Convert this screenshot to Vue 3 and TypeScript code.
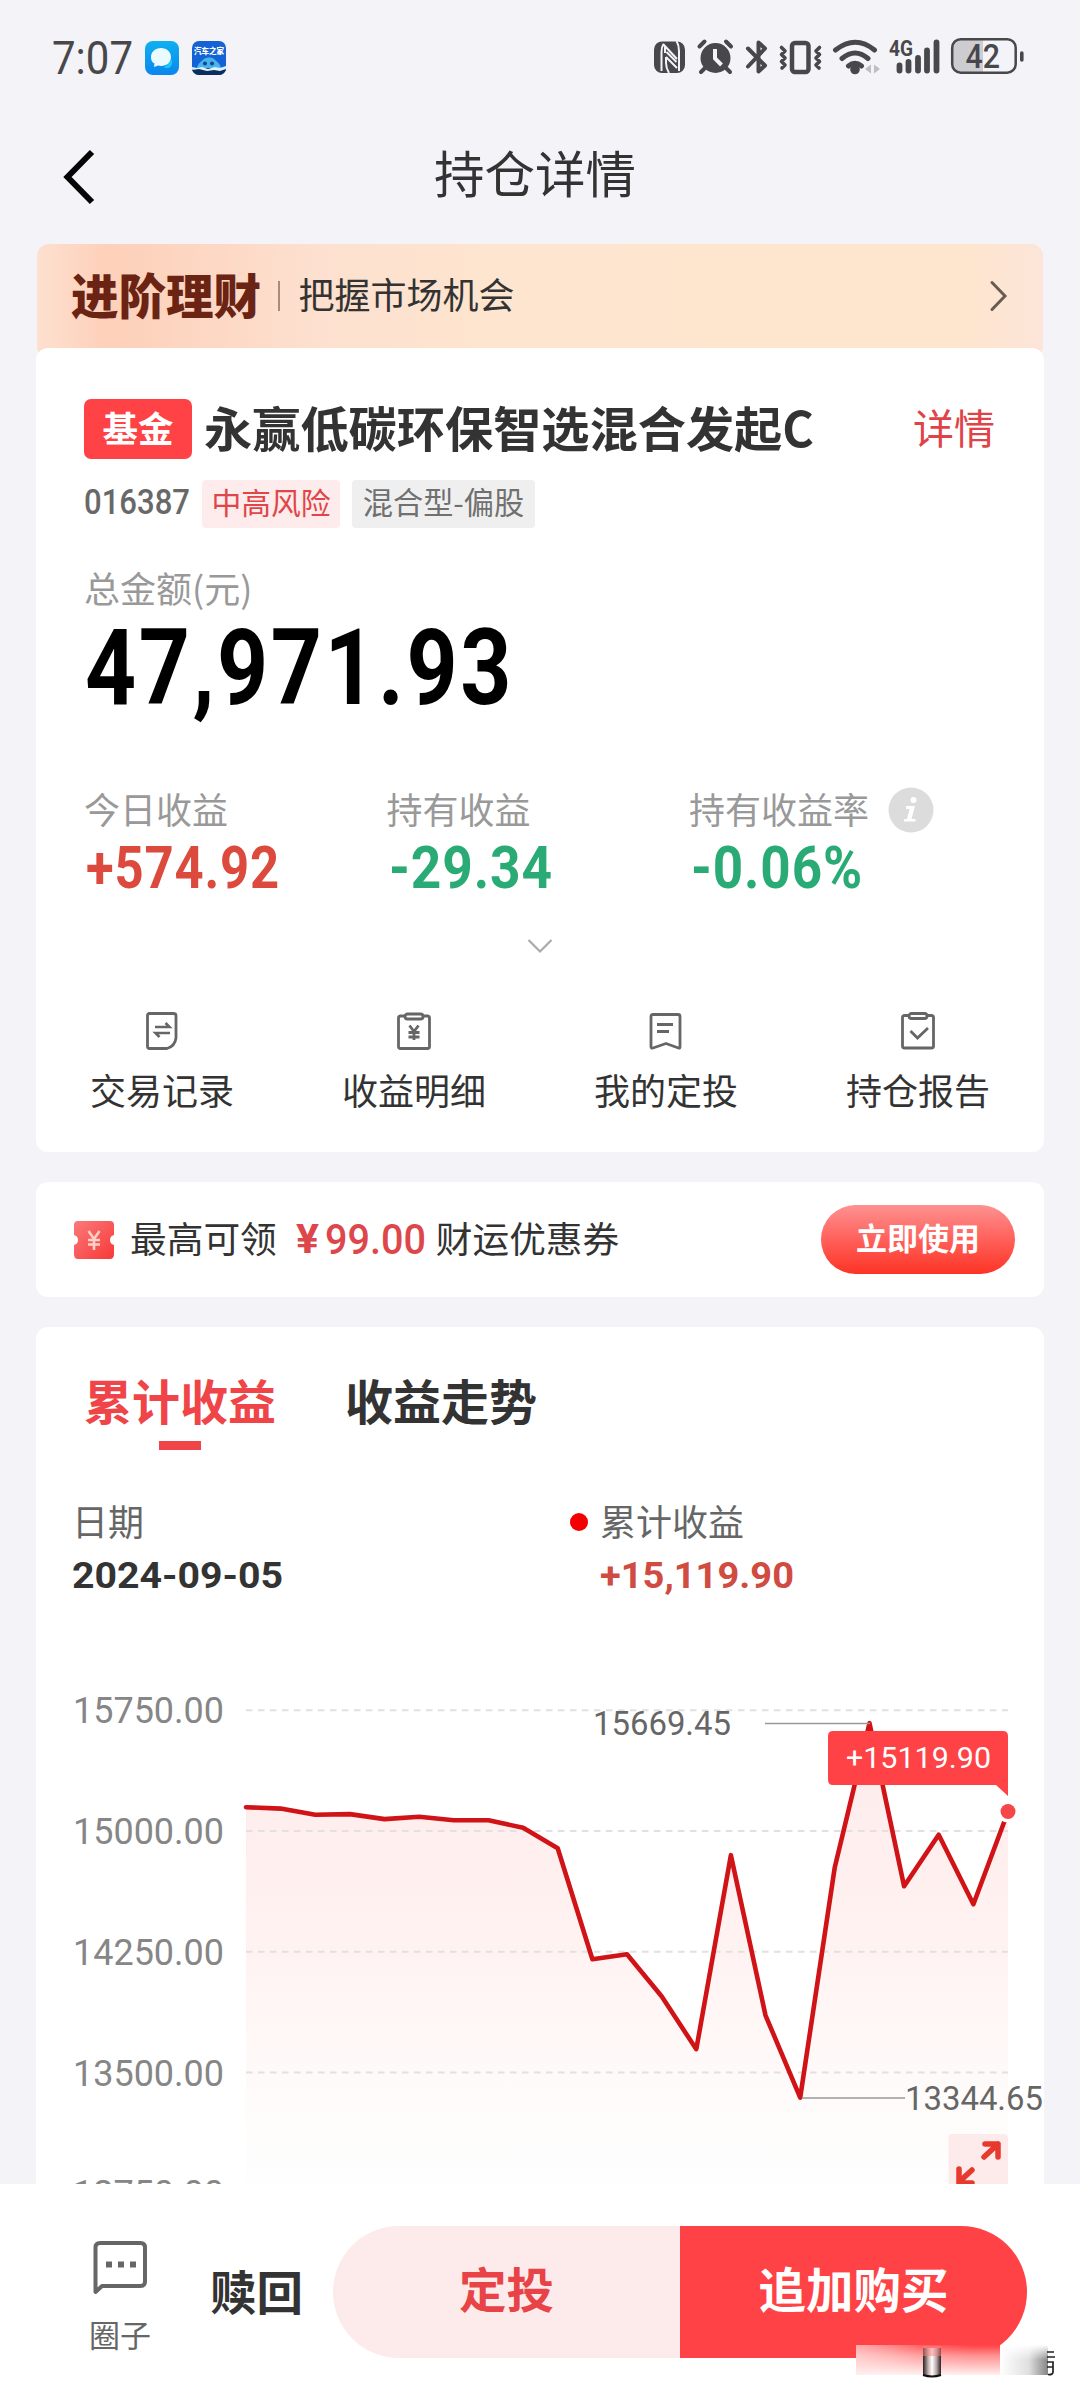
<script setup lang="ts">
interface Stat {
  label: string
  value: string
  width: number
  tone: 'up' | 'down'
  info?: boolean
}

const stats: Stat[] = [
  { label: '今日收益', value: '+574.92', width: 194, tone: 'up' },
  { label: '持有收益', value: '-29.34', width: 164, tone: 'down' },
  { label: '持有收益率', value: '-0.06%', width: 172, tone: 'down', info: true },
]

const actions = [
  { label: '交易记录', icon: 'record' },
  { label: '收益明细', icon: 'detail' },
  { label: '我的定投', icon: 'plan' },
  { label: '持仓报告', icon: 'report' },
]

/* chart geometry, in the svg's own pixels */
const left = 210
const right = 972
const yOf = (v: number): number => 176 + ((15000 - v) / 750) * 120.8

const series: number[] = [
  15148, 15139, 15101, 15105, 15074, 15089, 15067, 15067, 15020, 14893, 14204, 14235,
  13974, 13645, 14850, 13856, 13344.65, 14775, 15669.45, 14657, 14977, 14545, 15119.9,
]
const xOf = (i: number): number => left + (i * (right - left)) / (series.length - 1)
const line = series.map((v, i) => `${xOf(i).toFixed(1)},${yOf(v).toFixed(1)}`).join(' ')
const area = `${left},529 ${line} ${right},529`
const ticks = [15750, 15000, 14250, 13500, 12750]
</script>

<template>
  <div class="page">
    <header class="status">
      <svg class="clock" width="84" height="64">
        <text x="0" y="48" textLength="81" lengthAdjust="spacingAndGlyphs">7:07</text>
      </svg>
      <svg class="app" width="34" height="34" viewBox="0 0 34 34">
        <defs>
          <linearGradient id="msg" x1="0" y1="0" x2="0" y2="1">
            <stop offset="0" stop-color="#0fb0f0" /><stop offset="1" stop-color="#0a86ee" />
          </linearGradient>
        </defs>
        <rect width="34" height="34" rx="8" fill="url(#msg)" />
        <path d="M19 27h5q4-2 3-9z" fill="#19c8f4" />
        <path d="M16 7c6 0 10 4 10 9s-4 9-10 9c-1 0-2 0-3-.4L9 26l.5-3.500C7 21.500 6 19 6 16c0-5 4-9 10-9z" fill="#e9fbff" />
      </svg>
      <svg class="app second" width="34" height="34" viewBox="0 0 34 34">
        <defs><clipPath id="appclip"><rect width="34" height="34" rx="7" /></clipPath></defs>
        <g clip-path="url(#appclip)">
          <rect width="34" height="34" fill="#1463d6" />
          <rect y="27" width="34" height="7" fill="#0b2f5c" />
          <path d="M5 27c1-5 5-7 7-9 3-2 8-2 10 0 3 3 6 4 7 9z" fill="#4bb2ec" />
          <circle cx="13" cy="22.500" r="2" fill="#0d4a94" /><circle cx="20" cy="22.500" r="2" fill="#0d4a94" />
          <path d="M0 26l5 1 5-1 6 2 7-2 5 1 6-2v3l-6 2-6-1-7 1-8-2-7 1z" fill="#d8f3ff" />
        </g>
        <text x="17" y="13" text-anchor="middle" class="app-name">汽车之家</text>
      </svg>
      <svg class="sys" width="380" height="44" viewBox="0 0 380 44">
        <g fill="#48484b">
          <rect x="4" y="5.500" width="31" height="31.500" rx="8" />
          <path d="M13.500 8q-2 3-2 8v19M13 8l14 15M15 17v-7M16 21l11 11M16 21v6q0 5 3 10M26.500 5q2.500 4 2.500 10v20" stroke="#f3f3f8" stroke-width="2" fill="none" />
          <path d="M16.500 16l10 10" stroke="#f3f3f8" stroke-width="2" />
          <circle cx="65.500" cy="22" r="15" />
          <path d="M65 13v9.500l6.500 6.500" stroke="#f3f3f8" stroke-width="4" fill="none" />
          <path d="M49.500 10.500l5-5M81 10.500l-5-5M55 32l-4 4M76 32l4 4" stroke="#48484b" stroke-width="4" stroke-linecap="round" />
        </g>
        <g fill="none" stroke="#48484b" stroke-width="4" stroke-linejoin="round" stroke-linecap="round">
          <path d="M98 12.500l17 17-6.500 6V6.500l6.500 6-17 18" />
          <rect x="142" y="7" width="16.500" height="29" rx="3" stroke-width="4.500" />
          <path d="M131.500 11.500l3.500 3.500-3.500 3.500 3.500 3.500-3.500 3.500 3.500 3.500-3 3M169.500 11.500l-3.500 3.500 3.500 3.500-3.500 3.500 3.500 3.500-3.500 3.500 3 3" stroke-width="3.600" />
          <path d="M185.500 14q20-15.500 39 0M192 22.500q13-11 26 0M198.500 30q6.500-5.500 13 0" stroke-width="5" />
        </g>
        <circle cx="205" cy="33.500" r="4.800" fill="#48484b" />
        <path d="M221 28.500v9l-6-4.500zM224 28.500v9l6-4.500z" fill="#bdbdc2" />
        <path d="M249.500 29.500v5M258.500 26v8.500M268 22v12.500M277 14.500v20M286.500 6.500v28" stroke="#48484b" stroke-width="5.800" stroke-linecap="round" />
        <text x="239" y="20" class="net" textLength="24" lengthAdjust="spacingAndGlyphs">4G</text>
        <path d="M313 3.500h-4q-7 0-7 7v19q0 7 7 7h24v-33z" fill="#cdcdd1" />
        <rect x="302.200" y="3.200" width="63.500" height="33.500" rx="8.500" fill="none" stroke="#48484b" stroke-width="2.500" />
        <path d="M371.800 17v7" stroke="#48484b" stroke-width="3.600" stroke-linecap="round" />
        <text x="315.500" y="32" class="batt" textLength="34.500" lengthAdjust="spacingAndGlyphs">42</text>
      </svg>
    </header>

    <nav class="nav">
      <svg class="back" width="40" height="60" viewBox="0 0 40 60">
        <path d="M32 6L7.500 31 32 56" fill="none" stroke="#050505" stroke-width="6" />
      </svg>
      <h1>持仓详情</h1>
    </nav>

    <section class="banner">
      <b>进阶理财</b>
      <i></i>
      <span>把握市场机会</span>
      <svg width="20" height="34" viewBox="0 0 20 34">
        <path d="M4 3.500l13 13.500L4 30.500" fill="none" stroke="#6b5a52" stroke-width="3" stroke-linecap="round" />
      </svg>
    </section>

    <section class="card holding">
      <div class="fund">
        <span class="badge">基金</span>
        <h2>永赢低碳环保智选混合发起C</h2>
        <a>详情</a>
      </div>
      <div class="meta">
        <svg width="108" height="48">
          <text x="0" y="34" textLength="106" lengthAdjust="spacingAndGlyphs" class="code">016387</text>
        </svg>
        <span class="tag risk">中高风险</span>
        <span class="tag kind">混合型-偏股</span>
      </div>
      <div class="label total-label">总金额(元)</div>
      <svg class="total" width="440" height="124">
        <text x="0" y="95" textLength="429" lengthAdjust="spacingAndGlyphs">47,971.93</text>
      </svg>
      <div class="stats">
        <div v-for="s in stats" :key="s.label" class="stat">
          <div class="label">
            {{ s.label }}
            <svg v-if="s.info" class="info" width="46" height="46" viewBox="0 0 46 46">
              <circle cx="23" cy="23" r="22.500" fill="#dcdcdc" />
              <circle cx="25.500" cy="13" r="3" fill="#fff" />
              <path d="M18 19h9l-3.500 13h4v2.500H16V32h3l2.500-10H18z" fill="#fff" />
            </svg>
          </div>
          <svg width="210" height="76" :class="s.tone">
            <text x="2" y="60" :textLength="s.width" lengthAdjust="spacingAndGlyphs">{{ s.value }}</text>
          </svg>
        </div>
      </div>
      <svg class="more" width="30" height="24" viewBox="0 0 30 24">
        <path d="M3.500 6L15 17.500 26.500 6" fill="none" stroke="#aaa" stroke-width="2.200" />
      </svg>
      <div class="actions">
        <div v-for="a in actions" :key="a.label" class="action">
          <svg width="40" height="40" viewBox="0 0 40 40" fill="none" stroke="#666" stroke-width="2.800" stroke-linejoin="round">
            <template v-if="a.icon === 'record'">
              <path d="M7 1.500h24q3 0 3 2V26q-1 8-9 10.500H7.500q-2 0-2-2V3.500q0-2 2-2z" />
              <path d="M13 15h14.500l-4-4M28 21H13.500l4 4" stroke-width="2.600" stroke-linejoin="miter" />
            </template>
            <template v-else-if="a.icon === 'detail'">
              <path d="M11 4H6.500Q4.500 4 4.500 6v28.500q0 2 2 2h27q2 0 2-2V6q0-2-2-2H29" />
              <rect x="11" y="2" width="18" height="5" rx="2.500" />
              <path d="M15.500 13.500l4.500 6 4.500-6M14.500 20.500h11M14.500 25h11M20 19v9" stroke-width="2.800" />
            </template>
            <template v-else-if="a.icon === 'plan'">
              <path d="M7 2.500h25q2 0 2 2V35q0 1.500-1.500 1L20 31.500 7 36q-2 .5-2-1V4.500q0-2 2-2z" />
              <path d="M11 12.500h16M11 19.500h12" />
            </template>
            <template v-else>
              <path d="M11 3.500H6.500Q4.500 3.500 4.500 5.500v28.500q0 2 2 2h27q2 0 2-2V5.500q0-2-2-2H29" />
              <rect x="11" y="1.500" width="18" height="5" rx="2.500" />
              <path d="M12.500 19l7 7L30 16" stroke-linejoin="miter" />
            </template>
          </svg>
          <span>{{ a.label }}</span>
        </div>
      </div>
    </section>

    <section class="card coupon">
      <svg class="ticket" width="42" height="40" viewBox="0 0 42 40">
        <defs>
          <linearGradient id="tk" x1="0" y1="0" x2="1" y2="1">
            <stop offset="0" stop-color="#f97a7a" /><stop offset="1" stop-color="#f93838" />
          </linearGradient>
        </defs>
        <path d="M5 1h32q4 0 4 4v10q-4 1-4 5t4 5v9q0 5-4 5H5q-4 0-4-5v-9q4-1 4-5t-4-5V5q0-4 4-4z" fill="url(#tk)" />
        <path d="M15.500 11l5.500 8 5.500-8M15 20h12M15 24.500h12M21 19v11" fill="none" stroke="#ffd0c6" stroke-width="2.600" />
      </svg>
      <span>最高可领</span>
      <svg class="price" width="132" height="60">
        <text x="0" y="44" class="yen" textLength="23" lengthAdjust="spacingAndGlyphs">¥</text>
        <text x="29" y="45" textLength="101" lengthAdjust="spacingAndGlyphs">99.00</text>
      </svg>
      <span class="after">财运优惠券</span>
      <button>立即使用</button>
    </section>

    <section class="card trend">
      <div class="tabs">
        <div class="tab on">累计收益</div>
        <div class="tab">收益走势</div>
      </div>
      <div class="legend">
        <div class="date">
          <span>日期</span>
          <svg width="230" height="54">
            <text x="0" y="41" textLength="211" lengthAdjust="spacingAndGlyphs">2024-09-05</text>
          </svg>
        </div>
        <div class="sum">
          <span>累计收益</span>
          <svg width="230" height="54">
            <text x="0" y="41" textLength="194" lengthAdjust="spacingAndGlyphs">+15,119.90</text>
          </svg>
        </div>
      </div>
      <svg class="chart" width="1008" height="529" viewBox="0 0 1008 529">
        <defs>
          <linearGradient id="fill" gradientUnits="userSpaceOnUse" x1="0" y1="69" x2="0" y2="529">
            <stop offset="0" stop-color="#fdeaea" />
            <stop offset=".45" stop-color="#fff2f1" />
            <stop offset=".85" stop-color="#fefcfb" />
            <stop offset="1" stop-color="#fefefe" />
          </linearGradient>
        </defs>
        <polygon :points="area" fill="url(#fill)" />
        <g v-for="t in ticks" :key="t">
          <line v-if="t > 13000" :x1="left" :x2="right" :y1="yOf(t)" :y2="yOf(t)" stroke="#e3e0e0" stroke-width="2" stroke-dasharray="6.500 5.500" />
          <text x="37" :y="yOf(t) + 13" class="tick" textLength="151" lengthAdjust="spacingAndGlyphs">{{ t.toFixed(2) }}</text>
        </g>
        <polyline :points="line" fill="none" stroke="#d01317" stroke-width="4.600" stroke-linejoin="round" stroke-linecap="round" />
        <path d="M729 68.500h105M766 443h103" stroke="#999" stroke-width="1.600" />
        <text x="557" y="80" class="mark" textLength="138" lengthAdjust="spacingAndGlyphs">15669.45</text>
        <text x="869" y="455" class="mark" textLength="138" lengthAdjust="spacingAndGlyphs">13344.65</text>
        <path d="M797 76h170q5 0 5 5v60l-12-11H797q-5 0-5-5V81q0-5 5-5z" fill="#ff4245" />
        <text x="810" y="113" class="tip" textLength="145" lengthAdjust="spacingAndGlyphs">+15119.90</text>
        <circle cx="972" cy="156.500" r="11" fill="#fff" />
        <circle cx="972" cy="156.500" r="7.500" fill="#f54749" />
        <rect x="912.500" y="479" width="59.500" height="59" rx="4" fill="#fdeaea" />
        <g stroke="#e8392f" stroke-width="5.500" fill="none" stroke-linecap="round" stroke-linejoin="round">
          <path d="M948 502l14-13M949 489h13v13M936 515l-13 12M923 514v14h13" />
        </g>
      </svg>
    </section>

    <footer class="bar">
      <div class="circle">
        <svg width="58" height="58" viewBox="0 0 58 58">
          <path d="M4.500 53V8.500q0-4.500 4.500-4.500h40.500Q54 4 54 8.500v34q0 4.500-4.500 4.500H11z" fill="none" stroke="#666" stroke-width="4" stroke-linejoin="round" />
          <path d="M15 22.500h6v6h-6zM27 22.500h6v6h-6zM39 22.500h6v6h-6z" fill="#666" />
        </svg>
        <span>圈子</span>
      </div>
      <div class="redeem">赎回</div>
      <div class="pill">
        <div class="plan">定投</div>
        <div class="buy">追加购买</div>
      </div>
      <svg class="smudge" width="200" height="36" viewBox="0 0 200 36">
        <defs>
          <linearGradient id="sv" x1="0" y1="0" x2="0" y2="1">
            <stop offset="0" stop-color="#ff4245" /><stop offset=".35" stop-color="#ff9090" /><stop offset="1" stop-color="#fff0ee" />
          </linearGradient>
          <linearGradient id="sh" x1="0" y1="0" x2="1" y2="0">
            <stop offset="0" stop-color="#ffeeee" stop-opacity=".6" /><stop offset=".45" stop-color="#fff" stop-opacity=".15" /><stop offset=".8" stop-color="#fff" stop-opacity="0" />
          </linearGradient>
          <linearGradient id="sg" x1="0" y1="0" x2="1" y2="0">
            <stop offset="0" stop-color="#fff" /><stop offset=".6" stop-color="#dcdcdc" /><stop offset="1" stop-color="#777" />
          </linearGradient>
          <linearGradient id="sp" x1="0" y1="0" x2="1" y2="0">
            <stop offset="0" stop-color="#222" /><stop offset=".3" stop-color="#c9b2b2" /><stop offset=".5" stop-color="#fff" /><stop offset=".75" stop-color="#baa5a5" /><stop offset="1" stop-color="#222" />
          </linearGradient>
          <linearGradient id="sf" x1="0" y1="0" x2="0" y2="1">
            <stop offset="0" stop-color="#fff" stop-opacity="1" /><stop offset=".5" stop-color="#fff" stop-opacity=".1" />
          </linearGradient>
        </defs>
        <rect y="0" width="144" height="30" fill="url(#sv)" />
        <rect y="0" width="144" height="30" fill="url(#sh)" />
        <rect x="144" y="0" width="48" height="30" fill="url(#sg)" />
        <rect x="144" y="0" width="48" height="30" fill="url(#sf)" />
        <path d="M67 3h18v27q-9 3-18 0z" fill="url(#sp)" />
        <rect x="67" y="1" width="18" height="10" fill="#ff8080" opacity=".5" />
        <path d="M67 30q9 3 18 0" stroke="#111" stroke-width="2" fill="none" />
        <path d="M191 7h7M191 12h8M191 17h6v10q0 3-5 2.500M191 22h6" stroke="#222" stroke-width="1.700" fill="none" />
      </svg>
    </footer>
  </div>
</template>

<style>
body {
  background: #f3f3f8;
}
</style>

<style scoped>
.page {
  width: 1080px;
  height: 2400px;
  overflow: hidden;
  background: #f3f3f8;
  color: #333;
  font-family: 'Noto Sans CJK SC', 'Noto Sans', sans-serif;
}
svg {
  display: block;
  flex: none;
}
svg text {
  font-family: Roboto, 'Liberation Sans', sans-serif;
}
.status {
  height: 116px;
  display: flex;
  align-items: center;
  padding-left: 52px;
}
.clock text {
  font-size: 46px;
  fill: #48484b;
}
.app {
  margin-left: 9px;
}
.app.second {
  margin-left: 13px;
}
.app .app-name {
  font: 900 7.500px 'Noto Sans CJK SC', sans-serif;
  fill: #fff;
}
.sys {
  margin-left: 424px;
}
.sys .net {
  font-size: 22px;
  font-weight: 700;
  fill: #48484b;
}
.sys .batt {
  font-size: 33px;
  font-weight: 500;
  fill: #48484b;
}
.nav {
  height: 110px;
  margin-bottom: 18px;
  display: grid;
  grid-template-columns: 180px 1fr 190px;
  align-items: center;
}
.back {
  margin-left: 60px;
  margin-top: 10px;
}
.nav h1 {
  margin: 0;
  font-size: 50.500px;
  line-height: 60px;
  font-weight: 400;
  text-align: center;
}
.banner {
  box-sizing: border-box;
  height: 114px;
  margin: 0 37px;
  padding: 0 35px 15px 34px;
  border-radius: 12px;
  display: flex;
  align-items: center;
  background: linear-gradient(90deg, #fde0d0 0, #fdd0b9 7%, #fde0cf 28%, #fee5cf 45%, #fde5ce 92%, #fce5d8 100%);
}
.banner b {
  font-size: 47.500px;
  line-height: 60px;
  font-weight: 900;
  color: #6b2413;
}
.banner i {
  width: 1.500px;
  height: 30px;
  margin: 4px 19px 0 17px;
  background: #a98a7b;
}
.banner span {
  flex: 1;
  margin-top: -2px;
  font-size: 36px;
  line-height: 50px;
}
.banner svg {
  margin-top: 4px;
}
.card {
  box-sizing: border-box;
  margin: 0 36px;
  background: #fff;
  border-radius: 12px;
}
.holding {
  height: 804px;
  margin-top: -10px;
  padding-top: 51px;
}
.fund {
  height: 60px;
  padding: 0 49px 0 48px;
  display: flex;
  align-items: center;
}
.badge {
  width: 108px;
  height: 60px;
  border-radius: 7px;
  background: #ff4245;
  color: #fff;
  font-size: 35.500px;
  font-weight: 700;
  line-height: 56px;
  text-align: center;
}
.fund h2 {
  flex: 1;
  margin: -7px 0 0 12px;
  font-size: 48.200px;
  line-height: 60px;
  font-weight: 700;
  white-space: nowrap;
}
.fund a {
  margin-top: -6px;
  font-size: 41px;
  line-height: 60px;
  color: #e04347;
}
.meta {
  height: 48px;
  margin-top: 21px;
  padding-left: 48px;
  display: flex;
}
.meta .code {
  font-size: 35px;
  font-weight: 500;
  fill: #686868;
}
.tag {
  height: 48px;
  border-radius: 4px;
  font-size: 29.800px;
  line-height: 42px;
  text-align: center;
  white-space: nowrap;
}
.tag.risk {
  width: 138px;
  margin-left: 10px;
  background: #feecec;
  color: #df4649;
}
.tag.kind {
  width: 183px;
  margin-left: 12px;
  background: #efefef;
  color: #707070;
  font-size: 30.200px;
}
.label {
  height: 40px;
  display: flex;
  align-items: center;
  font-size: 36px;
  line-height: 40px;
  color: #999;
}
.total-label {
  margin: 39px 0 2px 48px;
}
.total {
  margin-left: 49px;
}
.total text {
  font-size: 105px;
  font-weight: 700;
  letter-spacing: 3px;
  fill: #000;
}
.stats {
  display: flex;
  margin: 55px 0 0 48px;
}
.stat {
  width: 302.500px;
}
.stat text {
  font-size: 60px;
  font-weight: 700;
  letter-spacing: 1px;
}
.info {
  margin: 4px 0 0 19px;
}
.up text {
  fill: #dc493d;
}
.down text {
  fill: #2aab75;
}
.more {
  margin: 30px auto 0;
}
.actions {
  margin-top: 54px;
  display: grid;
  grid-template-columns: repeat(4, 1fr);
}
.action {
  display: flex;
  flex-direction: column;
  align-items: center;
  gap: 17px;
  font-size: 36px;
  line-height: 40px;
}
.coupon {
  height: 115px;
  margin-top: 30px;
  padding: 0 29px 0 37px;
  display: flex;
  align-items: center;
  font-size: 36.700px;
  line-height: 50px;
}
.coupon span {
  margin: -6px 0 0 15px;
}
.coupon .price {
  margin: -2px 0 0 19px;
}
.coupon span.after {
  flex: 1;
  margin-left: 8px;
}
.price text {
  font-size: 43px;
  font-weight: 500;
  fill: #dd474c;
}
.price .yen {
  font-size: 40px;
  font-weight: 700;
}
.coupon button {
  width: 194px;
  height: 69px;
  padding: 0 0 5px;
  border: 0;
  border-radius: 35px;
  background: linear-gradient(#fd9291, #ff6560 45%, #fd3325);
  color: #fff;
  font: 700 31px/60px 'Noto Sans CJK SC', sans-serif;
}
.trend {
  height: 857px;
  margin-top: 30px;
  overflow: hidden;
  border-radius: 12px 12px 0 0;
}
.tabs {
  display: flex;
  gap: 69px;
  padding: 42px 0 0 48px;
}
.tab {
  font-size: 48px;
  line-height: 60px;
  font-weight: 700;
}
.tab.on {
  color: #ef4548;
}
.tab.on::after {
  content: '';
  display: block;
  width: 42px;
  height: 9px;
  margin: 12px auto 0;
  background: #ef4548;
}
.legend {
  height: 101px;
  margin-top: 50px;
  padding-left: 36px;
  display: flex;
  font-size: 36px;
  line-height: 40px;
  color: #666;
}
.legend span {
  display: block;
  height: 47px;
}
.date {
  width: 528px;
}
.legend text {
  font-size: 37px;
  font-weight: 700;
}
.date text {
  fill: #333;
}
.sum text {
  fill: #d04b42;
}
.legend .sum {
  width: 300px;
}
.sum span::before {
  content: '';
  float: left;
  width: 18px;
  height: 18px;
  margin: 13px 0 0 -30px;
  border-radius: 50%;
  background: #f50000;
}
.chart {
  margin-top: 54px;
}
.chart .tick {
  font-size: 36px;
  fill: #868686;
}
.chart .mark {
  font-size: 34px;
  fill: #666;
}
.chart .tip {
  font-size: 30px;
  fill: #fff;
}
.bar {
  position: relative;
  box-sizing: border-box;
  height: 216px;
  padding: 42px 53px 0 86px;
  display: flex;
  background: #fff;
}
.circle {
  width: 68px;
  padding-top: 13px;
  display: flex;
  flex-direction: column;
  align-items: center;
  font-size: 31px;
  line-height: 40px;
  color: #666;
}
.circle span {
  margin-top: 17px;
}
.redeem {
  width: 123px;
  padding-left: 56px;
  font-size: 46.500px;
  line-height: 127px;
  font-weight: 700;
}
.pill {
  width: 694px;
  height: 132px;
  border-radius: 66px;
  display: flex;
  overflow: hidden;
  font-size: 47.500px;
  line-height: 123px;
  font-weight: 700;
  text-align: center;
}
.plan {
  width: 347px;
  background: #fdeaea;
  color: #e84347;
}
.buy {
  width: 347px;
  background: #ff4245;
  color: #fff;
}
.smudge {
  position: absolute;
  left: 856px;
  top: 161px;
}
</style>
